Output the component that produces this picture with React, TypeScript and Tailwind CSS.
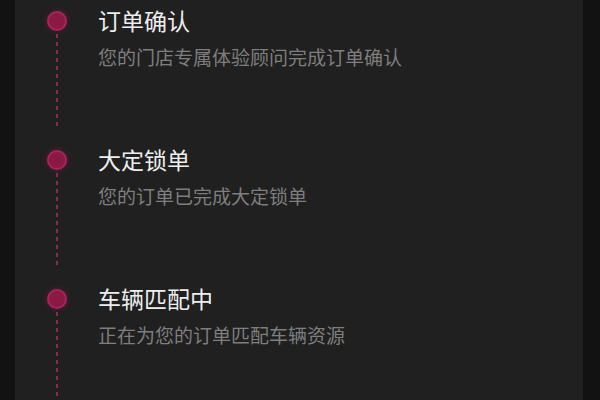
const steps = [
  { title: "订单确认", desc: "您的门店专属体验顾问完成订单确认" },
  { title: "大定锁单", desc: "您的订单已完成大定锁单" },
  { title: "车辆匹配中", desc: "正在为您的订单匹配车辆资源" },
];

export default function App() {
  return (
    <div
      className="h-[400px] w-[600px] overflow-hidden bg-[#121212]"
      style={{ fontFamily: '"Noto Sans CJK SC", "Noto Sans", sans-serif' }}
    >
      <div className="ml-[15px] h-full w-[568px] bg-[#202020] pt-[6px]">
        {steps.map((s) => (
          <div key={s.title} className="flex h-[139px]">
            {/* Timeline column */}
            <div className="ml-[32px] flex w-[20px] flex-col items-center">
              <div className="mt-[5px] h-[20px] w-[20px] rounded-full border-2 border-[#a8245a] bg-[#8a1a44] shadow-[0_0_6px_rgba(160,30,80,0.45)]" />
              <div className="mt-[3px] h-[94px] w-[2px] bg-[repeating-linear-gradient(to_bottom,#8a2a4f_0_4px,transparent_4px_8px)]" />
            </div>

            {/* Text */}
            <div className="ml-[31px] flex flex-col">
              <div className="text-[23px] leading-[28px] text-[#eeeeee]">{s.title}</div>
              <div className="mt-[11px] text-[19px] leading-[24px] text-[#7e7e7e]">{s.desc}</div>
            </div>
          </div>
        ))}
      </div>
    </div>
  );
}
